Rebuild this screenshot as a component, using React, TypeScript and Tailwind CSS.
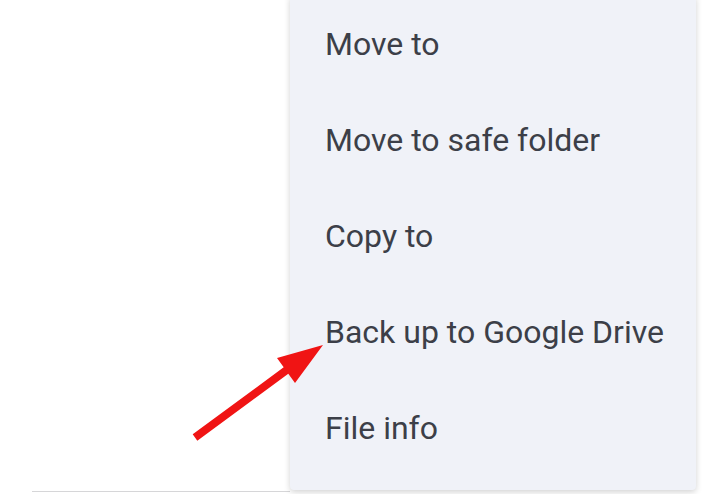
const items = ['Move to', 'Move to safe folder', 'Copy to', 'Back up to Google Drive', 'File info'];

export default function App() {
  return (
    <div className="relative w-[718px] h-[494px] overflow-hidden bg-white font-['Roboto',sans-serif]">
      <div className="flex items-start pl-8">
        {/* list area behind the menu, only its bottom divider shows */}
        <div className="w-[258px] h-[492px] border-b border-[#d6d6d8]" />

        {/* overflow menu */}
        <div className="w-[406px] -mt-1 pb-[14px] bg-[#f0f2f8] rounded-b shadow-[0_2px_6px_rgba(0,0,0,0.18)]">
          {items.map((label) => (
            <div key={label} className="h-24 flex items-center pl-[35px] pr-4 whitespace-nowrap text-[32px] leading-none text-[#3c3f48]">
              {label}
            </div>
          ))}
        </div>
      </div>

      {/* red annotation arrow */}
      <svg className="absolute left-0 top-0 pointer-events-none" width="718" height="494" viewBox="0 0 718 494">
        <polygon
          points="197.3,440.7 192.7,434.3 283.7,367.3 277,358 323,345 295,383 288.3,373.7"
          fill="#f01414"
        />
      </svg>
    </div>
  );
}
